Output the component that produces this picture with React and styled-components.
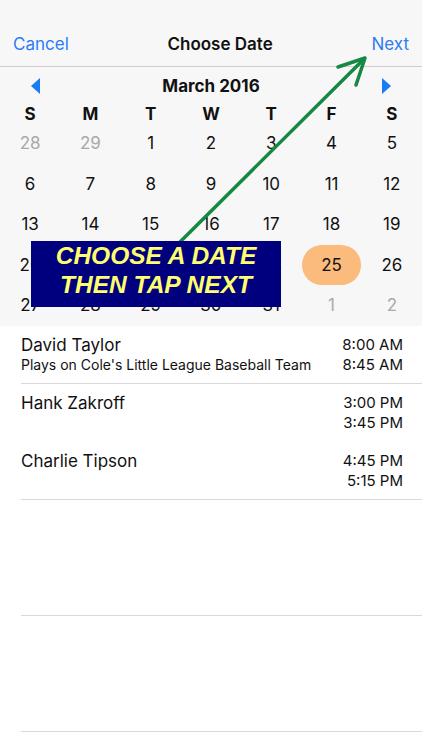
import React from 'react';
import styled, { createGlobalStyle } from 'styled-components';

const GlobalStyle = createGlobalStyle`
  html, body {
    margin: 0;
    padding: 0;
    background: #fff;
  }
  body {
    font-family: Inter, "Liberation Sans", Arial, sans-serif;
    -webkit-font-smoothing: antialiased;
  }
`;

const days = [
  [[28, true], [29, true], [1], [2], [3], [4], [5]],
  [[6], [7], [8], [9], [10], [11], [12]],
  [[13], [14], [15], [16], [17], [18], [19]],
  [[20], [21], [22], [23], [24], [25, false, true], [26]],
  [[27], [28], [29], [30], [31], [1, true], [2, true]],
];

const events = [
  { name: 'David Taylor', note: "Plays on Cole's Little League Baseball Team", start: '8:00 AM', end: '8:45 AM', line: true },
  { name: 'Hank Zakroff', start: '3:00 PM', end: '3:45 PM' },
  { name: 'Charlie Tipson', start: '4:45 PM', end: '5:15 PM', line: true },
];

const App = () => {
  return (
    <Page>
      <GlobalStyle />
      <StatusBar />
      <NavBar>
        <NavButton>Cancel</NavButton>
        <NavTitle>Choose Date</NavTitle>
        <NavButton>Next</NavButton>
      </NavBar>

      <Calendar>
        <MonthHeader>
          <MonthArrow viewBox="0 0 10 16">
            <path d="M9 0 L0 8 L9 16 Z" />
          </MonthArrow>
          <MonthTitle>March 2016</MonthTitle>
          <MonthArrow viewBox="0 0 10 16">
            <path d="M1 0 L10 8 L1 16 Z" />
          </MonthArrow>
        </MonthHeader>
        <Weekdays>
          {['S', 'M', 'T', 'W', 'T', 'F', 'S'].map((d, i) => (
            <Weekday key={i}>{d}</Weekday>
          ))}
        </Weekdays>
        <DayGrid>
          {days.flat().map(([n, muted, selected], i) => (
            <DayCell key={i}>
              <Day $muted={muted} $selected={selected}>{n}</Day>
            </DayCell>
          ))}
        </DayGrid>
      </Calendar>

      <EventList>
        {events.map((ev, i) => (
          <EventRow key={i} $line={ev.line}>
            <EventInfo>
              <EventName>{ev.name}</EventName>
              {ev.note && <EventNote>{ev.note}</EventNote>}
            </EventInfo>
            <EventTimes>
              <Time>{ev.start}</Time>
              <Time>{ev.end}</Time>
            </EventTimes>
          </EventRow>
        ))}
        <EmptyRow />
        <EmptyRow />
      </EventList>

      <Pointer viewBox="0 0 422 750">
        <line x1="180" y1="242" x2="363" y2="60" />
        <polyline points="338,67 365,58 356,85" />
      </Pointer>

      <Banner>
        CHOOSE A DATE
        <br />
        THEN TAP NEXT
      </Banner>
    </Page>
  );
};

const Page = styled.div`
  position: relative;
  width: 422px;
  height: 750px;
  overflow: hidden;
  background: #fff;
`;

const StatusBar = styled.div`
  height: 22px;
  background: #f7f7f7;
`;

const NavBar = styled.div`
  height: 44px;
  display: flex;
  align-items: center;
  justify-content: space-between;
  padding: 0 13px;
  background: #f7f7f7;
  border-bottom: 1px solid #cdcdd0;
`;

const NavButton = styled.span`
  font-size: 17px;
  color: #2c7cf6;
`;

const NavTitle = styled.span`
  font-size: 17px;
  font-weight: 600;
  color: #111;
`;

const Calendar = styled.div`
  background: #f7f7f7;
`;

const MonthHeader = styled.div`
  height: 37px;
  display: flex;
  align-items: center;
  justify-content: space-between;
  padding: 0 31px;
`;

const MonthArrow = styled.svg`
  width: 10px;
  height: 16px;
  fill: #1a7cf5;
`;

const MonthTitle = styled.span`
  font-size: 17px;
  font-weight: 700;
  color: #111;
`;

const Weekdays = styled.div`
  display: grid;
  grid-template-columns: repeat(7, 1fr);
  height: 19px;
  align-items: center;
`;

const Weekday = styled.span`
  text-align: center;
  font-size: 17px;
  font-weight: 700;
  color: #111;
`;

const DayGrid = styled.div`
  display: grid;
  grid-template-columns: repeat(7, 1fr);
  grid-auto-rows: 40.5px;
`;

const DayCell = styled.div`
  display: flex;
  align-items: center;
  justify-content: center;
`;

const Day = styled.span`
  width: 59px;
  height: 40px;
  border-radius: 20px;
  display: flex;
  align-items: center;
  justify-content: center;
  font-size: 17px;
  color: ${p => (p.$muted ? '#a9a9a9' : '#111')};
  background: ${p => (p.$selected ? '#fbbb7c' : 'transparent')};
`;

const EventList = styled.div`
  display: flex;
  flex-direction: column;
  padding-left: 21px;
`;

const EventRow = styled.div`
  height: 58px;
  display: flex;
  justify-content: space-between;
  align-items: flex-start;
  box-sizing: border-box;
  padding: 9px 19px 0 0;
  border-bottom: 1px solid ${p => (p.$line ? '#d9d9d9' : 'transparent')};
`;

const EventInfo = styled.div`
  display: flex;
  flex-direction: column;
`;

const EventName = styled.span`
  font-size: 17px;
  line-height: 20px;
  color: #111;
`;

const EventNote = styled.span`
  font-size: 14px;
  line-height: 20px;
  color: #111;
`;

const EventTimes = styled.div`
  display: flex;
  flex-direction: column;
  align-items: flex-end;
`;

const Time = styled.span`
  font-size: 15px;
  line-height: 20px;
  color: #111;
`;

const EmptyRow = styled.div`
  height: 115px;
  border-bottom: 1px solid #d9d9d9;
`;

const Pointer = styled.svg`
  position: absolute;
  left: 0;
  top: 0;
  width: 422px;
  height: 750px;
  pointer-events: none;
  fill: none;
  stroke: #168843;
  stroke-width: 3.5;
  stroke-linecap: round;
  stroke-linejoin: round;
`;

const Banner = styled.div`
  position: absolute;
  left: 31px;
  top: 241px;
  width: 250px;
  height: 66px;
  background: #00007f;
  color: #ffff6e;
  font-family: "Liberation Sans", Arial, sans-serif;
  font-size: 24.5px;
  font-weight: 700;
  font-style: italic;
  line-height: 29px;
  text-align: center;
`;

export default App;
